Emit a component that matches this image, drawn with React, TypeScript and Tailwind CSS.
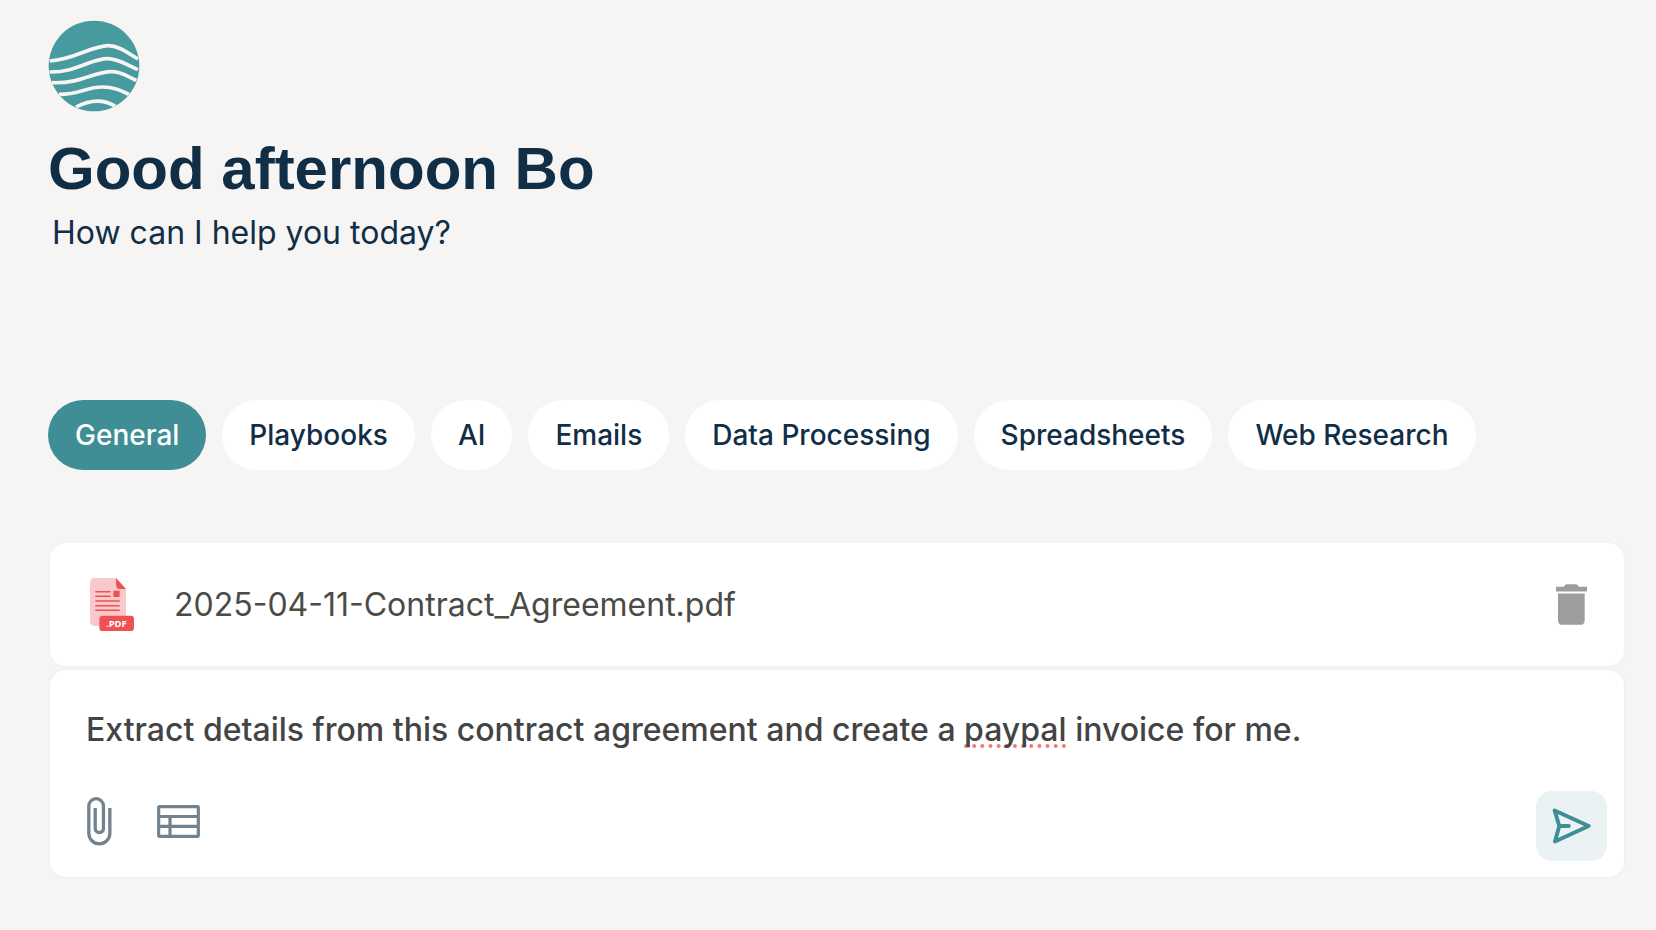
import { useState } from "react";

const categories = [
  "General",
  "Playbooks",
  "AI",
  "Emails",
  "Data Processing",
  "Spreadsheets",
  "Web Research",
];

const misspelled = /(paypal)/;

function Logo() {
  return (
    <svg viewBox="24 30 276 276" className="size-[92px]" role="img" aria-label="Logo">
      <clipPath id="logo-disc">
        <circle cx="162" cy="168" r="136" />
      </clipPath>
      <circle cx="162" cy="168" r="136" fill="#479a9d" />
      <g clipPath="url(#logo-disc)" fill="none" stroke="#f6f5f4" strokeWidth="11">
        <path d="M29 153C100 150 155 107 205 107C238 107 264 130 294 147" />
        <path d="M28 186C110 188 150 146 203 146C236 146 262 166 294 179" />
        <path d="M36 218C120 222 160 185 215 185C244 185 262 199 289 211" />
        <path d="M57 253C115 254 140 231 187 231C222 231 244 242 267 253" />
        <path d="M108 291C150 269 190 267 226 289" />
      </g>
    </svg>
  );
}

function PdfIcon() {
  return (
    <svg viewBox="150 144 132 159" className="h-[53px] w-11 shrink-0" aria-hidden="true">
      <path d="M166 144H228L258 177V288H166Q150 288 150 272V160Q150 144 166 144Z" fill="#f8c8ca" />
      <path d="M228 144L258 177H240Q228 177 228 163Z" fill="#ee5155" />
      <path
        d="M166 185H212M166 199H212M166 213H239M166 227H239M166 241H239"
        stroke="#ee5155"
        strokeWidth="4.5"
      />
      <rect x="220" y="182" width="19" height="19" rx="2" fill="#ee5155" />
      <rect x="178" y="257" width="104" height="46" rx="10" fill="#ee5155" />
      <text
        x="229"
        y="290"
        textAnchor="middle"
        fill="#ffffff"
        className="font-['Open_Sans',sans-serif] text-[28px] font-bold"
      >
        .PDF
      </text>
    </svg>
  );
}

function TrashIcon() {
  return (
    <svg viewBox="168 162 93 122" className="h-[41px] w-[31px]" fill="#9d9d9d" aria-hidden="true">
      <path d="M168 170H191L198 162H230L237 170H261V184H168Z" />
      <path d="M174 190H254V270Q254 284 240 284H188Q174 284 174 270Z" />
    </svg>
  );
}

function PaperclipIcon() {
  return (
    <svg viewBox="81 81 76 148" className="h-[49px] w-[25px]" fill="none" stroke="#72828e" strokeWidth="10" aria-hidden="true">
      <path d="M150.500 114V191A32 32 0 0 1 86.500 191V108A22 22 0 0 1 131 108V176A12.500 12.500 0 0 1 106 176V114" />
    </svg>
  );
}

function TableIcon() {
  return (
    <svg viewBox="291 105 129 99" className="h-[33px] w-[43px]" fill="none" stroke="#72828e" strokeWidth="9.5" aria-hidden="true">
      <rect x="296" y="110" width="119" height="89" rx="3" />
      <path d="M296 139.500H415M296 169H415M330 139.500V199" />
    </svg>
  );
}

function SendIcon() {
  return (
    <svg
      viewBox="156 114 118 108"
      className="h-9 w-[39px]"
      fill="none"
      stroke="#3f8e96"
      strokeWidth="12"
      strokeLinecap="round"
      strokeLinejoin="round"
      aria-hidden="true"
    >
      <path d="M164 121L267 168L165 215L178 168ZM178 168H207" />
    </svg>
  );
}

function PromptField() {
  const [value, setValue] = useState(
    "Extract details from this contract agreement and create a paypal invoice for me.",
  );
  return (
    <div className="relative px-9 text-[32px] leading-10 font-medium">
      <div aria-hidden="true" className="pointer-events-none absolute inset-0 px-9 whitespace-pre-wrap text-transparent">
        {value.split(misspelled).map((part, i) =>
          misspelled.test(part) ? (
            <span
              key={i}
              className="underline decoration-[#f27a74] decoration-dotted decoration-4 underline-offset-3 [text-decoration-skip-ink:none]"
            >
              {part}
            </span>
          ) : (
            part
          ),
        )}
      </div>
      <textarea
        aria-label="Message"
        rows={1}
        spellCheck={false}
        value={value}
        onChange={(e) => setValue(e.target.value)}
        className="relative block w-full resize-none overflow-hidden bg-transparent text-[#444444] outline-none"
      />
    </div>
  );
}

export default function App() {
  const [active, setActive] = useState("General");
  return (
    <main className="min-h-screen bg-[#f6f5f4] pt-5 pr-[30px] pb-12 pl-12 font-[Inter,sans-serif] text-[#112e47]">
      <Logo />
      <h1 className="mt-[21px] font-['Liberation_Sans',Arial,sans-serif] text-[60px] leading-[72px] font-bold">
        Good afternoon Bo
      </h1>
      <p className="mt-2 pl-1 text-[32px] leading-10">How can I help you today?</p>

      <nav aria-label="Categories" className="mt-[147px] flex flex-wrap gap-4">
        {categories.map((name) => (
          <button
            key={name}
            type="button"
            aria-pressed={name === active}
            onClick={() => setActive(name)}
            className={
              name === active
                ? "h-[70px] rounded-full bg-[#3f8e96] px-[27px] text-[28px] font-medium text-white"
                : "h-[70px] rounded-full bg-white px-[27px] text-[28px] font-medium"
            }
          >
            {name}
          </button>
        ))}
      </nav>

      <div className="mt-[71px] flex flex-col">
        <section className="flex h-[127px] items-center rounded-[18px] border-2 border-[#f2f2f7] bg-white pr-[37px] pl-10">
          <PdfIcon />
          <span className="ml-10 flex-1 text-[32px] leading-10 text-[#4b4b46]">2025-04-11-Contract_Agreement.pdf</span>
          <button type="button" aria-label="Remove file">
            <TrashIcon />
          </button>
        </section>

        <form
          onSubmit={(e) => e.preventDefault()}
          className="rounded-[18px] border-2 border-[#f2f2f3] bg-white pt-10 pb-4"
        >
          <PromptField />
          <div className="mt-[41px] flex items-start pr-[17px] pl-[37px]">
            <button type="button" aria-label="Attach file" className="mt-1.5">
              <PaperclipIcon />
            </button>
            <button type="button" aria-label="Insert table" className="mt-3.5 ml-[45px]">
              <TableIcon />
            </button>
            <button
              type="submit"
              aria-label="Send"
              className="ml-auto flex h-[70px] w-[71px] items-center justify-center rounded-2xl bg-[#eaf2f4]"
            >
              <SendIcon />
            </button>
          </div>
        </form>
      </div>
    </main>
  );
}
